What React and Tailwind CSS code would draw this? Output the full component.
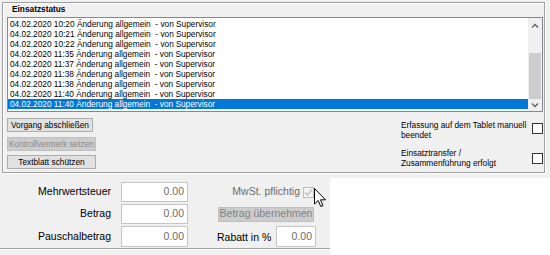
const rows = [
  "04.02.2020 10:20 Änderung allgemein  - von Supervisor",
  "04.02.2020 10:21 Änderung allgemein  - von Supervisor",
  "04.02.2020 10:22 Änderung allgemein  - von Supervisor",
  "04.02.2020 11:35 Änderung allgemein  - von Supervisor",
  "04.02.2020 11:37 Änderung allgemein  - von Supervisor",
  "04.02.2020 11:38 Änderung allgemein  - von Supervisor",
  "04.02.2020 11:38 Änderung allgemein  - von Supervisor",
  "04.02.2020 11:40 Änderung allgemein  - von Supervisor",
  "04.02.2020 11:40 Änderung allgemein  - von Supervisor",
];

const Chevron = ({ up }) => (
  <svg width="8" height="5" viewBox="0 0 8 5">
    <path
      d={up ? "M1 4.5 L4 1.5 L7 4.5" : "M1 0.5 L4 3.5 L7 0.5"}
      fill="none"
      stroke="#606060"
      strokeWidth="1.3"
    />
  </svg>
);

const Btn = ({ children, disabled, className = "" }) => (
  <div
    className={`flex items-center justify-center h-[14px] border text-[8.3px] leading-none whitespace-nowrap ${
      disabled
        ? "bg-[#cccccc] border-[#bfbfbf] text-[#8a8a8a]"
        : "bg-[#e1e1e1] border-[#adadad] text-black"
    } ${className}`}
  >
    {children}
  </div>
);

const Field = ({ className = "" }) => (
  <div
    className={`flex items-center justify-end pr-[3px] bg-white border border-[#c4c4c4] text-[#6d6d6d] ${className}`}
  >
    0.00
  </div>
);

export default function App() {
  return (
    <div className="relative w-[550px] h-[255px] bg-[#f0f0f0] overflow-hidden font-['Liberation_Sans',Arial,sans-serif] text-black">
      {/* Einsatzstatus group */}
      <div className="ml-[2px] mt-[2px] w-[543px] h-[171px] border border-[#a0a0a0] shadow-[1px_1px_0_#ffffff,inset_1px_1px_0_#ffffff] flex flex-col">
        <div className="pl-[9px] pt-[1px] h-[14px] text-[8.3px] leading-[10px] font-bold">
          Einsatzstatus
        </div>
        <div className="ml-[4px] w-[536px] h-[95px] border border-[#828790] bg-white flex">
          <div className="flex-1 pt-[1px] text-[8.3px]">
            {rows.map((r, i) => {
              const sel = i === rows.length - 1;
              return (
                <div
                  key={i}
                  className={`h-[10px] leading-[10px] pl-[2px] whitespace-pre ${
                    sel ? "bg-[#0078d7] text-white" : ""
                  }`}
                >
                  {r}
                </div>
              );
            })}
          </div>
          <div className="w-[14px] bg-[#f0f0f0] flex flex-col">
            <div className="h-[14px] flex items-center justify-center">
              <Chevron up />
            </div>
            <div className="flex-1" />
            <div className="h-[46px] mx-[1px] bg-[#cdcdcd]" />
            <div className="h-[12px] flex items-center justify-center">
              <Chevron />
            </div>
          </div>
        </div>
        <div className="flex flex-1">
          <div className="pl-[4px] pt-[6px] flex flex-col">
            <Btn className="w-[86px]">Vorgang abschließen</Btn>
            <Btn disabled className="w-[89px] mt-[5px]">
              Kontrollvermerk setzen
            </Btn>
            <Btn className="w-[89px] mt-[4px]">Textblatt schützen</Btn>
          </div>
          <div className="ml-auto mr-[1px] pt-[8px] flex flex-col text-[8.3px] leading-[10px]">
            <div className="flex items-center">
              <div className="w-[131px]">
                Erfassung auf dem Tablet manuell
                <br />
                beendet
              </div>
              <div className="w-[11px] h-[11px] bg-white border border-[#333333] -mt-[3px]" />
            </div>
            <div className="flex items-center mt-[8px]">
              <div className="w-[131px]">
                Einsatztransfer /
                <br />
                Zusammenführung erfolgt
              </div>
              <div className="w-[11px] h-[11px] bg-white border border-[#333333]" />
            </div>
          </div>
        </div>
      </div>

      {/* Amount section */}
      <div className="flex">
        <div className="w-[330px] h-[82px] pt-[9px] flex flex-col text-[10.5px]">
          <div className="flex items-center h-[20px]">
            <div className="w-[111px] text-right">Mehrwertsteuer</div>
            <Field className="ml-[10px] w-[67px] h-[20px]" />
            <div className="w-[112px] text-right text-[#6d6d6d]">MwSt. pflichtig</div>
            <div className="ml-[3px] w-[11px] h-[11px] border border-[#bcbcbc] bg-[#f4f4f4] flex items-center justify-center">
              <svg width="9" height="9" viewBox="0 0 9 9">
                <path d="M1 4.5 L3.5 7 L8 1.5" fill="none" stroke="#bcbcbc" strokeWidth="1.2" />
              </svg>
            </div>
          </div>
          <div className="flex items-center h-[20px] mt-[2px]">
            <div className="w-[111px] text-right">Betrag</div>
            <Field className="ml-[10px] w-[67px] h-[20px]" />
            <div className="ml-[30px] w-[96px] h-[15px] bg-[#cccccc] border border-[#bfbfbf] text-[#838383] flex items-center justify-center whitespace-nowrap">
              Betrag übernehmen
            </div>
          </div>
          <div className="flex items-center h-[21px] mt-[2px]">
            <div className="w-[111px] text-right">Pauschalbetrag</div>
            <Field className="ml-[10px] w-[67px] h-[21px]" />
            <div className="ml-[29px] w-[59px] mt-[2px] whitespace-nowrap">Rabatt in %</div>
            <Field className="w-[40px] h-[21px]" />
          </div>
          <div className="mt-[1px] border-t border-[#a0a0a0] h-[2px] bg-[#f0f0f0] shadow-[inset_0_1px_0_#ffffff]" />
        </div>
        <div className="flex-1 mt-[5px] h-[77px] bg-white" />
      </div>

      {/* mouse pointer */}
      <svg
        className="absolute left-[314px] top-[188px]"
        width="13"
        height="20"
        viewBox="0 0 13 20"
      >
        <path
          d="M0.5 0.5 L0.5 16 L4.2 12.5 L6.8 18.5 L9 17.6 L6.5 11.8 L11.5 11.8 Z"
          fill="#ffffff"
          stroke="#000000"
          strokeWidth="1"
          strokeLinejoin="round"
        />
      </svg>
    </div>
  );
}
